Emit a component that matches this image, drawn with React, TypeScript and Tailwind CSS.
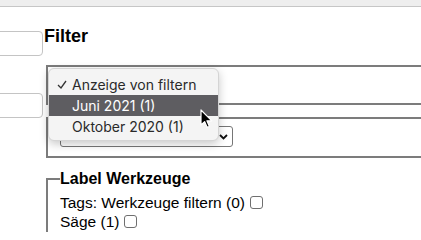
const font = { fontFamily: '"Liberation Sans", Arial, sans-serif' };

const Checkbox = () => (
  <span className="inline-block w-[13px] h-[13px] border border-[#6f6f6f] rounded-[3px] bg-white ml-[5px]" />
);

const Popup = () => (
  <div
    className="absolute left-[48px] top-[68px] w-[171px] rounded-[6px] border border-[#d4d4d4] bg-[#f4f4f4] pt-[5px] pb-[3px] shadow-[0_3px_10px_rgba(0,0,0,0.22)] text-[14px] text-[#2a2a2a]"
    style={{ fontFamily: 'Inter, "Liberation Sans", sans-serif' }}
  >
    <div className="flex h-[21px] items-center">
      <span className="w-[23px] flex justify-end pr-[5px]">
        <svg width="10" height="9" viewBox="0 0 10 9" fill="none">
          <path d="M1 5 L4 8 L9 1" stroke="#333" strokeWidth="1.3" />
        </svg>
      </span>
      <span>Anzeige von filtern</span>
    </div>
    <div className="flex h-[21px] items-center bg-[#5e5d61] text-white pl-[23px]">Juni 2021 (1)</div>
    <div className="flex h-[21px] items-center pl-[23px]">Oktober 2020 (1)</div>
  </div>
);

const Cursor = () => (
  <svg className="absolute left-[200px] top-[109px]" width="14" height="20" viewBox="0 0 14 20">
    <path
      d="M1 1 L1 16 L4.6 12.6 L7.2 18.4 L9.4 17.4 L6.9 11.8 L11.8 11.8 Z"
      fill="#000"
      stroke="#fff"
      strokeWidth="1.2"
      strokeLinejoin="round"
    />
  </svg>
);

export default function App() {
  return (
    <div className="relative w-[421px] h-[232px] overflow-hidden bg-white text-black" style={font}>
      <div className="h-[7px] bg-[#eeeeee] border-b border-[#c6c6c6]" />
      <div className="flex">
        <div className="w-[44px] shrink-0 flex flex-col">
          <div className="mt-[24px] -ml-[100px] w-[143px] h-[25px] border border-[#c4c4c4] rounded-[4px]" />
          <div className="mt-[37px] -ml-[100px] w-[143px] h-[25px] border border-[#c4c4c4] rounded-[4px]" />
        </div>
        <div className="w-[600px] shrink-0 flex flex-col">
          <h2 className="mt-[19px] text-[18px] leading-[21px] font-bold">Filter</h2>
          <div className="mt-[18px] ml-[2px] h-[40px] border-2 border-[#7c7c7c]" />
          <div className="mt-[12px] ml-[2px] h-[41px] border-2 border-[#7c7c7c] pl-[12px] pt-[7px]">
            <div className="w-[173px] h-[21px] border border-[#767676] rounded-[3px] flex items-center justify-between pl-[4px] pr-[4px] text-[13px]">
              <span>Länderauswahl filtern</span>
              <svg width="9" height="6" viewBox="0 0 9 6" fill="none">
                <path d="M1 1 L4.5 4.5 L8 1" stroke="#111" strokeWidth="1.8" />
              </svg>
            </div>
          </div>
          <fieldset className="mt-[12px] ml-[2px] border-2 border-[#7c7c7c] pl-[12px] pt-[5px] pb-[10px]">
            <legend className="w-[540px] px-0 text-[16px] leading-[18px] font-bold">Label Werkzeuge</legend>
            <div className="flex items-center text-[15.5px] leading-[19px]">
              Tags: Werkzeuge filtern (0)
              <Checkbox />
            </div>
            <div className="flex items-center text-[15.5px] leading-[19px]">
              Säge (1)
              <Checkbox />
            </div>
          </fieldset>
        </div>
      </div>
      <Popup />
      <Cursor />
    </div>
  );
}
